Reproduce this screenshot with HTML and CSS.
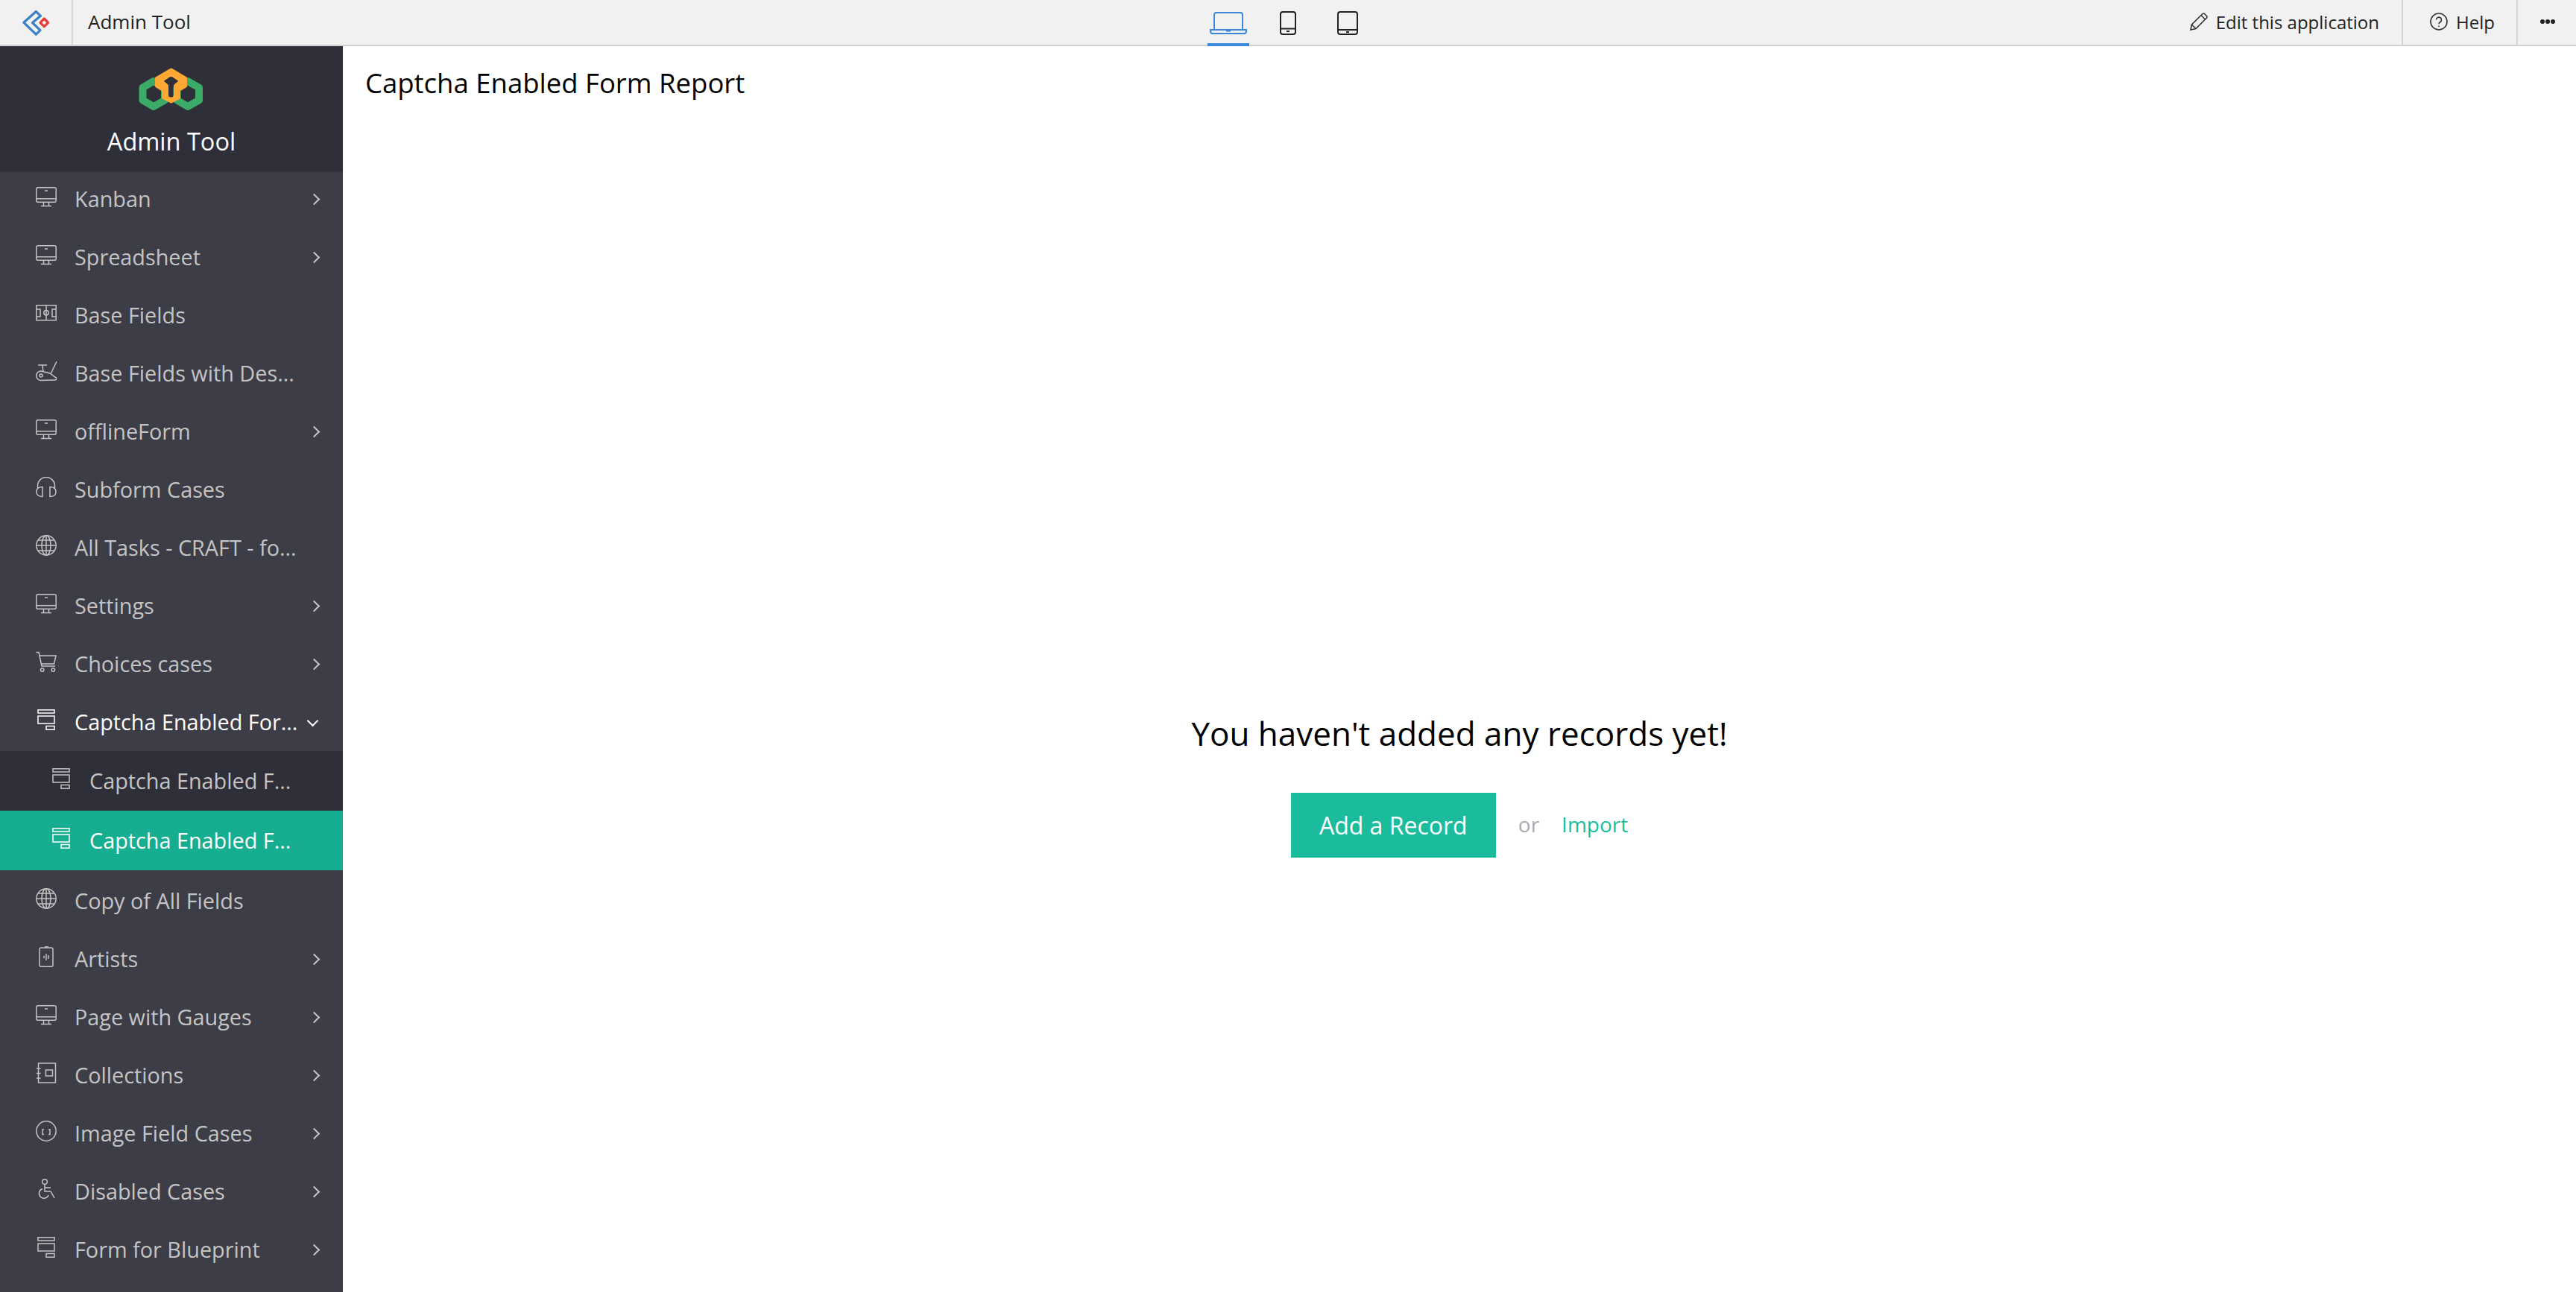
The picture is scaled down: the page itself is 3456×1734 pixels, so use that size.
FILE: index.html
```html
<!DOCTYPE html>
<html lang="en">

<head>
    <meta charset="UTF-8">
    <title>Admin Tool</title>
    <link rel="stylesheet" href="styles.css">
</head>

<body>
    <!-- icon set used by the menu -->
    <svg class="sprite" width="0" height="0">
        <symbol id="i-monitor" viewBox="0 0 28 28">
            <rect x="0.8" y="1.8" width="26.4" height="19.4" rx="2" />
            <path d="M1 16.8h26M12 6h4M10.5 21.5v4.5M17.5 21.5v4.5M7 26.5h14" />
        </symbol>
        <symbol id="i-field" viewBox="0 0 28 28">
            <rect x="0.8" y="3.8" width="26.4" height="20" />
            <path d="M14 4v19.5M1 9h5v10H1M27 9h-5v10h5" />
            <circle cx="14" cy="13.8" r="3.2" />
        </symbol>
        <symbol id="i-bike" viewBox="0 0 28 28">
            <path d="M28 1l-7.500 16M3 6h12M9 6l1 9" />
            <path d="M7 14l12 3 7.500 5.500a1.800 1.800 0 0 1-.5 3.500L7 26.500a6.200 6.200 0 0 1 0-12.500z" />
            <circle cx="7" cy="20" r="2" />
        </symbol>
        <symbol id="i-phones" viewBox="0 0 28 28">
            <path d="M2.500 15v-3a11.500 11.500 0 0 1 23 0v3" />
            <path d="M9 13.500v13c-5 0-8-2.500-8-6.500s3-6.500 8-6.500zM19 13.500v13c5 0 8-2.500 8-6.500s-3-6.500-8-6.500z" />
        </symbol>
        <symbol id="i-globe" viewBox="0 0 28 28">
            <circle cx="14" cy="14" r="13.2" />
            <ellipse cx="14" cy="14" rx="6" ry="13.2" />
            <path d="M14 1v26M1 14h26M3 7h22M3 21h22" />
        </symbol>
        <symbol id="i-cart" viewBox="0 0 28 28">
            <path d="M0.500 1.500h3.500L8 20h18M5 6h22l-2.500 11H7.500" />
            <circle cx="8.700" cy="25" r="2.200" />
            <circle cx="23.300" cy="25" r="2.200" />
        </symbol>
        <symbol id="i-form" viewBox="0 0 28 28">
            <rect x="3" y="0.8" width="22" height="4.2" />
            <rect x="3" y="9" width="22" height="10" />
            <rect x="14" y="22.5" width="11" height="4.7" />
        </symbol>
        <symbol id="i-artist" viewBox="0 0 28 28">
            <rect x="5" y="2" width="18" height="25.2" rx="2" />
            <path d="M12 0.800h5M11 13v3M14 10v9M17 12v5" />
        </symbol>
        <symbol id="i-notebook" viewBox="0 0 28 28">
            <rect x="3.500" y="1" width="23" height="26" />
            <path d="M1 8h5.500M1 14.500h5.500M1 21h5.500" />
            <rect x="13.500" y="10" width="9" height="8" />
        </symbol>
        <symbol id="i-image" viewBox="0 0 28 28">
            <circle cx="14" cy="14" r="13.2" />
            <path d="M11 12H9v6.500h2M17 12h2v6.500h-2" />
        </symbol>
        <symbol id="i-wheel" viewBox="0 0 28 28">
            <circle cx="12" cy="4" r="3.300" />
            <path d="M12 7.500V17h8l5 9M12 12h8" />
            <path d="M9 13.500a6.500 6.500 0 1 0 8 8.500" />
        </symbol>
    </svg>

    <header class="topbar">
        <div class="topbar-left">
            <a class="brand-cell" href="#">
                <svg class="brand-icon" viewBox="28 12 40 41">
                    <path class="brand-blue" d="M48.300 17.500l6.200 5.800-11 9.200 10.500 10.200-5.700 5.500-16.500-16z" />
                    <path class="brand-red" d="M59.300 27l5.300 5.300-5.300 5.300-5.300-5.300z" />
                </svg>
            </a>
            <span class="app-name">Admin Tool</span>
        </div>

        <div class="devices">
            <a class="device active" href="#">
                <svg width="50" height="30" viewBox="0 0 50 30">
                    <path d="M6 24V4a3 3 0 0 1 3-3h32a3 3 0 0 1 3 3v20" />
                    <path d="M1 24h48v2a3 3 0 0 1-3 3H4a3 3 0 0 1-3-3zM22 25.500h6" />
                </svg>
            </a>
            <a class="device" href="#">
                <svg width="22" height="32" viewBox="0 0 22 32">
                    <rect x="1" y="1" width="20" height="30" rx="3" />
                    <path d="M1 23.500h20M9 27h4" />
                </svg>
            </a>
            <a class="device" href="#">
                <svg width="28" height="32" viewBox="0 0 28 32">
                    <rect x="1" y="1" width="26" height="30" rx="3" />
                    <path d="M1 25h26M12 28h4" />
                </svg>
            </a>
        </div>

        <div class="topbar-right">
            <a class="top-link edit-link" href="#">
                <svg class="top-icon" viewBox="0 0 24 24">
                    <path d="M1 23l1.500-7L17 1.500a2 2 0 0 1 2.500 0l3 3a2 2 0 0 1 0 2.500L8 21.500zM2.500 16L8 21.500M15 3.500L20.500 9" />
                </svg>
                Edit this application
            </a>
            <a class="top-link help-link" href="#">
                <svg class="top-icon" viewBox="0 0 24 24">
                    <circle cx="12" cy="12" r="11" />
                    <path d="M8.500 9.500a3.500 3.500 0 1 1 5.500 3c-1.300.8-2 1.400-2 2.800M12 17.500v1.500" />
                </svg>
                Help
            </a>
            <a class="top-link more-link" href="#">
                <span class="dot"></span><span class="dot"></span><span class="dot"></span>
            </a>
        </div>
    </header>

    <div class="main">
        <aside class="sidebar">
            <div class="side-head">
                <svg class="app-logo" viewBox="15 8 92 64">
                    <path class="hex-green" d="M37 29l15 8.500v17L37 63l-14.500-8.500v-17zM83 29l15 8.500v17L83 63l-14.500-8.500v-17z" />
                    <path class="hex-orange" fill-rule="evenodd" d="M60.700 13.500L80 25v10.500l-9 5.500V51L60.700 56.500 50 51V41l-9-5.500V25zM60.500 19.500l13 9-7.500 6.500V47a5.500 5.500 0 0 1-11 0V35l-7.500-6.500z" />
                </svg>
                <div class="side-title">Admin Tool</div>
            </div>

            <nav class="menu">
                <ul class="menu-list">
                    <li><a class="menu-item" href="#"><svg class="menu-icon"><use href="#i-monitor" /></svg><span class="menu-text">Kanban</span><span class="chev"></span></a></li>
                    <li><a class="menu-item" href="#"><svg class="menu-icon"><use href="#i-monitor" /></svg><span class="menu-text">Spreadsheet</span><span class="chev"></span></a></li>
                    <li><a class="menu-item" href="#"><svg class="menu-icon"><use href="#i-field" /></svg><span class="menu-text">Base Fields</span></a></li>
                    <li><a class="menu-item" href="#"><svg class="menu-icon"><use href="#i-bike" /></svg><span class="menu-text">Base Fields with Des...</span></a></li>
                    <li><a class="menu-item" href="#"><svg class="menu-icon"><use href="#i-monitor" /></svg><span class="menu-text">offlineForm</span><span class="chev"></span></a></li>
                    <li><a class="menu-item" href="#"><svg class="menu-icon"><use href="#i-phones" /></svg><span class="menu-text">Subform Cases</span></a></li>
                    <li><a class="menu-item" href="#"><svg class="menu-icon"><use href="#i-globe" /></svg><span class="menu-text">All Tasks - CRAFT - fo...</span></a></li>
                    <li><a class="menu-item" href="#"><svg class="menu-icon"><use href="#i-monitor" /></svg><span class="menu-text">Settings</span><span class="chev"></span></a></li>
                    <li><a class="menu-item" href="#"><svg class="menu-icon"><use href="#i-cart" /></svg><span class="menu-text">Choices cases</span><span class="chev"></span></a></li>
                    <li>
                        <a class="menu-item open" href="#"><svg class="menu-icon"><use href="#i-form" /></svg><span class="menu-text">Captcha Enabled For...</span><span class="chev-down"></span></a>
                        <ul class="sub-list">
                            <li><a class="sub-item" href="#"><svg class="menu-icon"><use href="#i-form" /></svg><span class="menu-text">Captcha Enabled F...</span></a></li>
                            <li><a class="sub-item current" href="#"><svg class="menu-icon"><use href="#i-form" /></svg><span class="menu-text">Captcha Enabled F...</span></a></li>
                        </ul>
                    </li>
                    <li class="after-sub"><a class="menu-item" href="#"><svg class="menu-icon"><use href="#i-globe" /></svg><span class="menu-text">Copy of All Fields</span></a></li>
                    <li><a class="menu-item" href="#"><svg class="menu-icon"><use href="#i-artist" /></svg><span class="menu-text">Artists</span><span class="chev"></span></a></li>
                    <li><a class="menu-item" href="#"><svg class="menu-icon"><use href="#i-monitor" /></svg><span class="menu-text">Page with Gauges</span><span class="chev"></span></a></li>
                    <li><a class="menu-item" href="#"><svg class="menu-icon"><use href="#i-notebook" /></svg><span class="menu-text">Collections</span><span class="chev"></span></a></li>
                    <li><a class="menu-item" href="#"><svg class="menu-icon"><use href="#i-image" /></svg><span class="menu-text">Image Field Cases</span><span class="chev"></span></a></li>
                    <li><a class="menu-item" href="#"><svg class="menu-icon"><use href="#i-wheel" /></svg><span class="menu-text">Disabled Cases</span><span class="chev"></span></a></li>
                    <li><a class="menu-item" href="#"><svg class="menu-icon"><use href="#i-form" /></svg><span class="menu-text">Form for Blueprint</span><span class="chev"></span></a></li>
                </ul>
            </nav>
        </aside>

        <section class="content">
            <h1 class="report-title">Captcha Enabled Form Report</h1>
            <div class="empty">
                <h2 class="empty-title">You haven't added any records yet!</h2>
                <div class="empty-actions">
                    <button class="add-btn">Add a Record</button>
                    <span class="or">or</span>
                    <a class="import" href="#">Import</a>
                </div>
            </div>
        </section>
    </div>
</body>

</html>
```

FILE: styles.css
```css
* {
    box-sizing: border-box;
}

body {
    font-family: "Open Sans", Arial, sans-serif;
    background-color: #fff;
    margin: 0;
    height: 100vh;
    display: flex;
    flex-direction: column;
    overflow: hidden;
}

a {
    text-decoration: none;
    color: inherit;
}

ul {
    list-style: none;
    margin: 0;
    padding: 0;
}

.sprite {
    position: absolute;
}

/* top bar */
.topbar {
    height: 62px;
    flex: none;
    background-color: #f1f1f1;
    border-bottom: 2px solid #d2d2d2;
    display: flex;
    align-items: stretch;
    color: #222;
    font-size: 24px;
}

.topbar-left,
.topbar-right {
    flex: 1;
    display: flex;
    align-items: center;
}

.topbar-right {
    justify-content: flex-end;
    align-items: stretch;
}

.brand-cell {
    width: 98px;
    height: 100%;
    border-right: 2px solid #d3d3de;
    display: flex;
    align-items: center;
    padding-left: 28px;
}

.brand-icon {
    width: 40px;
    height: 41px;
}

.brand-blue {
    fill: none;
    stroke: #3b80c8;
    stroke-width: 3.2;
    stroke-linejoin: round;
}

.brand-red {
    fill: none;
    stroke: #e83a3c;
    stroke-width: 3.2;
    stroke-linejoin: round;
}

.app-name {
    margin-left: 20px;
    font-size: 26px;
    margin-top: -2px;
}

.devices {
    display: flex;
    gap: 24px;
}

.device {
    width: 56px;
    display: flex;
    align-items: center;
    justify-content: center;
    margin-bottom: -2px;
    padding-top: 3px;
    border-bottom: 4px solid transparent;
}

.device svg {
    fill: none;
    stroke: #222;
    stroke-width: 2;
}

.device.active {
    border-bottom-color: #3a87dc;
}

.device.active svg {
    stroke: #3a87dc;
}

.top-link {
    display: flex;
    align-items: center;
    border-left: 2px solid #d3d3de;
    padding-bottom: 2px;
}

.top-icon {
    width: 24px;
    height: 24px;
    fill: none;
    stroke: #333;
    stroke-width: 1.6;
    margin-right: 11px;
}

.edit-link {
    border-left: 0;
    padding-right: 30px;
}

.help-link {
    width: 154px;
    padding-left: 36px;
}

.more-link {
    width: 80px;
    padding-left: 30px;
    gap: 1px;
}

.dot {
    width: 6px;
    height: 6px;
    border-radius: 50%;
    background-color: #222;
}

/* sidebar */
.main {
    flex: 1;
    display: flex;
    min-height: 0;
}

.sidebar {
    width: 460px;
    flex: none;
    display: flex;
    flex-direction: column;
    background-color: #3d3d47;
}

.side-head {
    height: 170px;
    flex: none;
    background-color: #2f2f39;
    display: flex;
    flex-direction: column;
    align-items: center;
    padding-top: 26px;
    position: relative;
    z-index: 1;
    border-bottom: 2px solid #3a3a44;
}

.app-logo {
    width: 92px;
    height: 64px;
    fill: none;
}

.hex-green {
    fill: none;
    stroke: #3cab68;
    stroke-width: 10;
    stroke-linejoin: round;
}

.hex-orange {
    fill: #fda835;
    stroke: #fda835;
    stroke-width: 4;
    stroke-linejoin: round;
}

.side-title {
    color: #fff;
    font-size: 32.5px;
    line-height: 44px;
    margin-top: 16px;
}

.menu {
    flex: 1;
    overflow: hidden;
}

.menu-list {
    margin-top: -4px;
}

.after-sub {
    margin-top: 2px;
}

.menu-item,
.sub-item {
    display: flex;
    align-items: center;
    height: 78px;
    padding-left: 48px;
    color: #c4c4c4;
    font-size: 28.8px;
}

.menu-item.open {
    color: #fff;
}

.menu-text {
    margin-left: 24px;
    width: 298px;
    white-space: nowrap;
    margin-top: -2px;
}

.menu-icon {
    width: 28px;
    height: 28px;
    flex: none;
    fill: none;
    stroke: currentColor;
    stroke-width: 1.5;
    margin-bottom: 6px;
}

.chev {
    width: 11px;
    height: 11px;
    margin-left: 18px;
    border-top: 2px solid #c4c4c4;
    border-right: 2px solid #c4c4c4;
    transform: rotate(45deg);
}

.chev-down {
    width: 11px;
    height: 11px;
    margin-left: 16px;
    margin-top: -4px;
    border-bottom: 2px solid #fff;
    border-right: 2px solid #fff;
    transform: rotate(45deg);
}

.sub-list {
    background-color: #2f2f39;
}

.sub-item {
    height: 80px;
    padding-left: 68px;
}

.sub-item .menu-text {
    width: 268px;
}

.sub-item.current {
    background-color: #16ae91;
    color: #fff;
}

/* report area */
.content {
    flex: 1;
    padding-left: 30px;
}

.report-title {
    font-size: 36.5px;
    font-weight: 400;
    color: #000;
    margin: 0;
    padding-top: 24px;
    line-height: 50px;
}

.empty {
    display: flex;
    flex-direction: column;
    align-items: center;
    margin-top: 818px;
    padding-right: 30px;
}

.empty-title {
    font-size: 44px;
    font-weight: 400;
    color: #000;
    margin: 0;
    line-height: 60px;
}

.empty-actions {
    display: flex;
    align-items: center;
    margin-top: 50px;
    font-size: 28px;
}

.add-btn {
    width: 275px;
    height: 87px;
    border: 0;
    background-color: #1abc9c;
    color: #fff;
    font-family: inherit;
    font-size: 32px;
}

.or {
    color: #aaa;
    margin-left: 30px;
    margin-top: -3px;
}

.import {
    color: #1abc9c;
    margin-left: 30px;
    margin-top: -3px;
}
```
